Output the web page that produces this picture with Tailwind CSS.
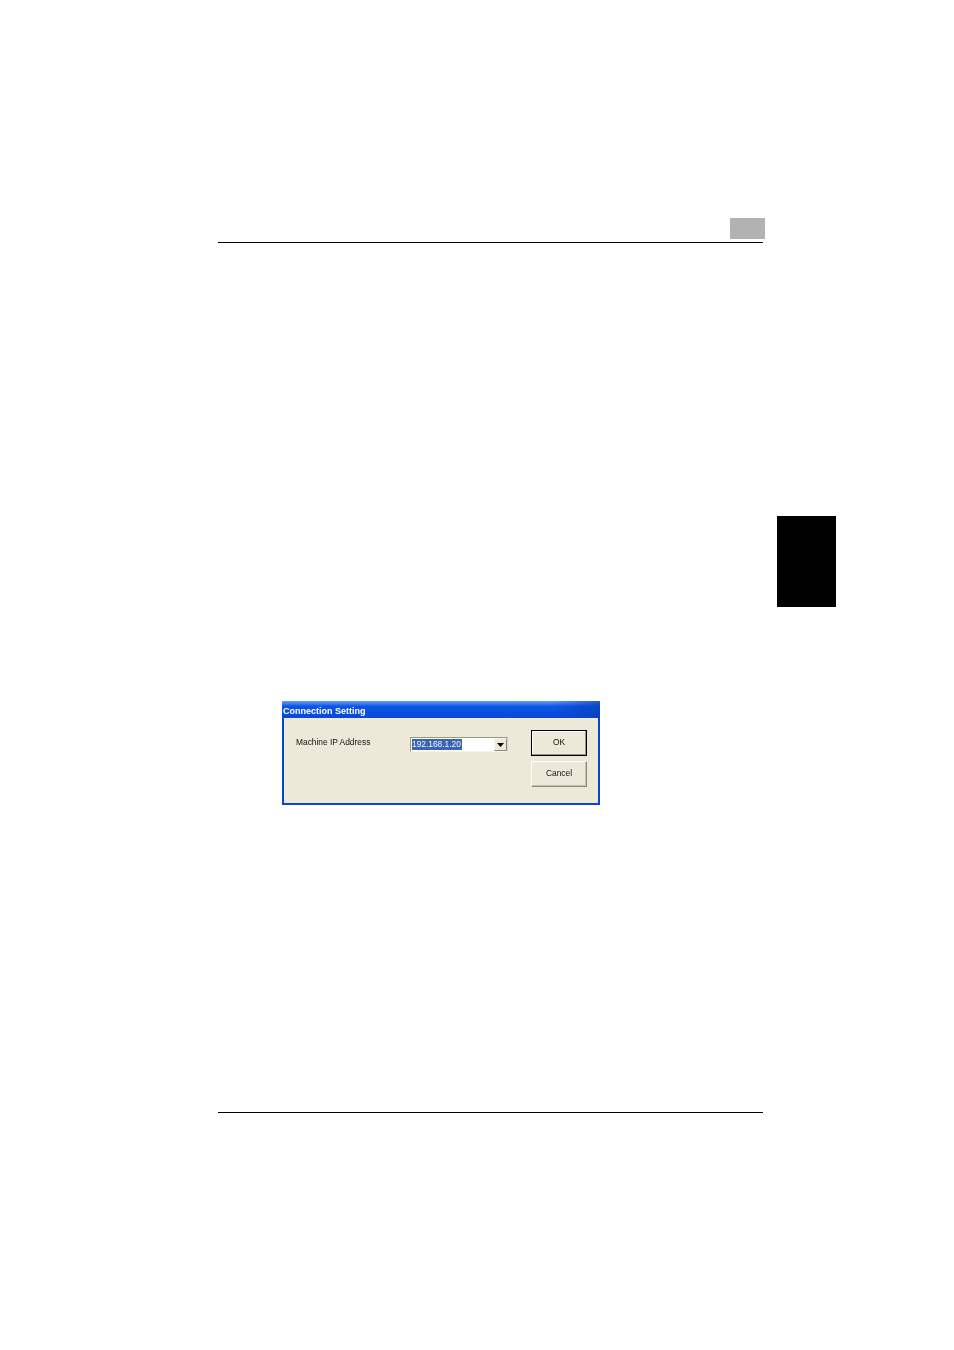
<!DOCTYPE html>
<html>
<head>
<meta charset="utf-8">
<script src="https://cdn.jsdelivr.net/npm/@tailwindcss/browser@4"></script>
</head>
<body class="bg-white">
<div class="relative w-[954px] h-[1350px] overflow-hidden bg-white font-['Liberation_Sans',sans-serif]">
  <div class="absolute left-[777px] top-[516px] w-[59px] h-[91px] bg-black"></div>
  <div class="flex flex-col pt-[218px] pl-[218px] w-[765px]">
    <div class="flex justify-end h-[21px]">
      <div class="w-[35px] h-[21px] bg-[#b2b2b2]"></div>
    </div>
    <div class="mt-[3px] h-[1px] w-[545px] bg-black"></div>
    <div class="mt-[458px] ml-[64px] w-[318px] h-[104px] flex flex-col bg-[#0b44d0] px-[2px] pb-[2px]">
      <div class="-mx-[2px] h-[17px] shrink-0 bg-gradient-to-b from-[#6a9cf0] via-[#0a56e6] via-30% to-[#0a48d8]">
        <div class="h-full flex items-center pl-[1px] pt-[3px] bg-gradient-to-r from-transparent via-transparent via-85% to-[#0a3cb8]/70">
          <span class="text-[9px] font-bold leading-none text-white blur-[0.25px]">Connection Setting</span>
        </div>
      </div>
      <div class="flex-1 bg-[#ece9d8] flex items-start">
        <span class="mt-[18px] ml-[12px] w-[114px] text-[8.4px] leading-[12px] text-[#111] blur-[0.25px]">Machine IP Address</span>
        <div class="mt-[19px] w-[98px] h-[15px] flex items-center bg-white border border-[#9a9684] border-r-[#d8d5c6] border-b-[#f5f3ea]">
          <div class="flex flex-1 h-full items-center py-[1px] pl-[1px]">
            <span class="w-[50px] h-full bg-[#3a64b8] text-[#f4f6fb] text-[8.4px] leading-[11px] blur-[0.25px] whitespace-nowrap">192.168.1.20</span>
          </div>
          <div class="w-[13px] h-[13px] flex items-center justify-center bg-[#ece9d8] border border-[#f8f7f0] border-r-[#8c897a] border-b-[#8c897a]">
            <svg width="7" height="4" viewBox="0 0 7 4"><path d="M0 0H7L3.5 4Z" fill="#000"/></svg>
          </div>
        </div>
        <div class="ml-[23px] mt-[12px] flex flex-col gap-[5px]">
          <div class="w-[56px] h-[26px] flex items-center justify-center pb-[2px] border border-black bg-[#ece9d8] shadow-[inset_-1px_-1px_0_#9a9684,inset_1px_1px_0_#fff] text-[8.4px] text-[#111] blur-[0.2px]">OK</div>
          <div class="w-[56px] h-[26px] flex items-center justify-center pb-[2px] border border-[#fff] border-r-[#8c897a] border-b-[#8c897a] bg-[#ece9d8] shadow-[inset_-1px_-1px_0_#c4c1b0] text-[8.4px] text-[#111] blur-[0.2px]">Cancel</div>
        </div>
      </div>
    </div>
    <div class="mt-[307px] h-[1px] w-[545px] bg-black"></div>
  </div>
</div>
</body>
</html>
